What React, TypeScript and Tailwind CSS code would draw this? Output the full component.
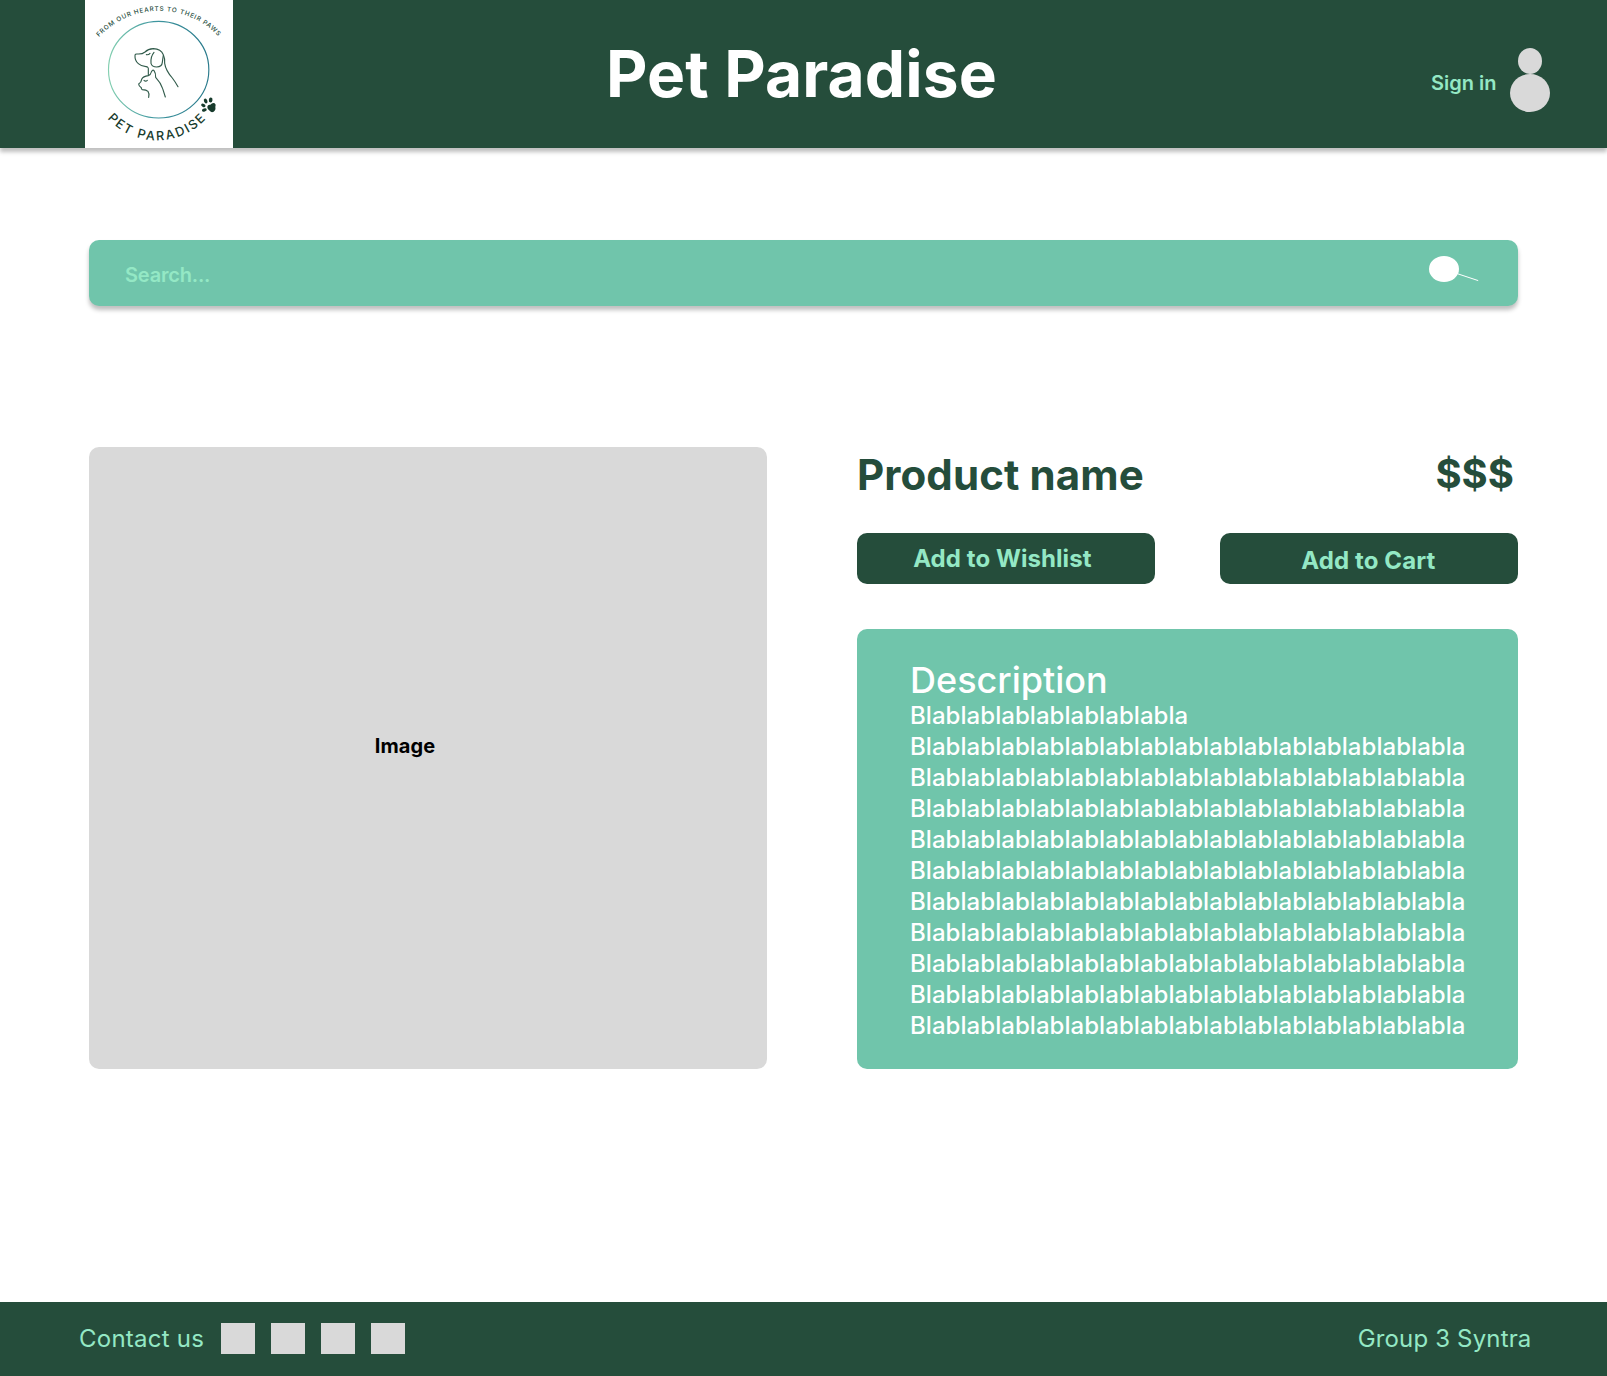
const socials = ['facebook', 'instagram', 'twitter', 'youtube'];

const description = [
  'Blablablablablablablabla',
  ...Array.from({ length: 10 }, () => 'Blablablablablablablablablablablablablablablabla'),
];

function Logo() {
  return (
    <svg className="h-[148px] w-[148px] shrink-0 bg-white" viewBox="15 0 444 444" role="img" aria-label="Pet Paradise">
      <defs>
        <linearGradient id="ring" x1="0" x2="1" y1="0" y2="0">
          <stop offset="0" stopColor="#83cfb0" />
          <stop offset="0.45" stopColor="#3f97a0" />
          <stop offset="1" stopColor="#27788a" />
        </linearGradient>
        <path id="tagline" d="M57 111A246 246 0 0 1 419 113" />
        <path id="brand" d="M82 355A200 200 0 0 0 386 347" />
      </defs>
      <ellipse cx="236" cy="209" rx="150.5" ry="145" fill="none" stroke="url(#ring)" strokeWidth="3.4" />
      <g className="font-['Inter',sans-serif]" fill="#234a3a">
        <text fontSize="19" fontWeight="500">
          <textPath href="#tagline" textLength="400">FROM OUR HEARTS TO THEIR PAWS</textPath>
        </text>
        <text fontSize="38" fontWeight="500" fill="#173b2c">
          <textPath href="#brand" textLength="332">PET PARADISE</textPath>
        </text>
      </g>
      <g fill="none" stroke="#315b4b" strokeWidth="3.4" strokeLinecap="round" strokeLinejoin="round">
        <path d="M205 226V208Q206 201 198 200Q185 200 175 191Q164 181 165 167Q165 161 172 162Q187 163 195 156Q204 147 220 146Q243 147 250 164Q255 175 254 190Q257 211 277 234Q286 246 294 260" />
        <path d="M222 157Q211 170 213 190Q216 201 230 201Q246 200 247 187Q248 178 250 166" />
        <path d="M199 164Q206 165 210 160" />
        <path d="M206 292Q209 281 204 274Q199 269 187 269Q183 267 184 263Q176 258 176 252Q184 247 185 238Q189 229 205 227Q212 225 214 216Q218 207 222 212Q227 218 227 232Q243 249 248 266L256 291" />
        <path d="M192 241Q197 246 202 241" />
      </g>
      <g fill="#173b2c">
        <path d="M382 322Q382 313 391 314Q398 306 404 310Q409 314 406 321Q408 331 401 335Q394 339 389 332Q382 330 382 322Z" />
        <ellipse cx="377" cy="303" rx="5" ry="7.5" transform="rotate(-25 377 303)" />
        <ellipse cx="392" cy="300" rx="5.5" ry="7.5" transform="rotate(8 392 300)" />
        <ellipse cx="370" cy="316" rx="4.8" ry="7" transform="rotate(-60 370 316)" />
        <ellipse cx="373" cy="330" rx="4.8" ry="7.5" transform="rotate(70 373 330)" />
      </g>
    </svg>
  );
}

export default function App() {
  return (
    <div className="flex h-[1376px] w-[1607px] flex-col bg-white font-['Inter',sans-serif]">
      <header className="flex h-[148px] shrink-0 items-start bg-[#254d3b] pl-[85px] pr-[57px] shadow-[0_4px_4px_rgba(0,0,0,0.25)]">
        <Logo />
        <h1 className="ml-[373px] pt-[38px] text-[64px] leading-[72px] font-bold tracking-[0.12px] text-white">
          Pet Paradise
        </h1>
        <a className="mt-[71px] mr-[13.5px] ml-auto text-[20px] leading-6 font-semibold text-[#94e8c5]">Sign in</a>
        <div className="mt-12 flex w-10 flex-col items-center">
          <span className="h-[26px] w-6 rounded-[50%] bg-[#d9d9d9]" />
          <span className="h-[38px] w-10 rounded-[50%] bg-[#d9d9d9]" />
        </div>
      </header>

      <main className="flex flex-1 flex-col px-[89px] pt-[92px]">
        <div className="flex h-[66px] items-start justify-between rounded-[10px] bg-[#70c5ab] pl-[36px] shadow-[0_4px_4px_rgba(0,0,0,0.25)]">
          <span className="mt-[23px] text-[20px] leading-6 font-semibold tracking-[-0.2px] text-[#94e8c5]">Search...</span>
          <svg className="mt-4 mr-[39px] h-[26px] w-[50px]" viewBox="0 0 50 26" fill="none">
            <ellipse cx="15" cy="13" rx="15" ry="13" fill="#fff" />
            <path d="M29 17.9L49.2 24.6" stroke="#fff" />
          </svg>
        </div>

        <div className="mt-[141.4px] flex items-start justify-between">
          <div className="flex h-[621.2px] w-[678px] items-start rounded-[10px] bg-[#d9d9d9] pt-[286.6px] pl-[285.8px]">
            <span className="text-[20px] leading-6 font-bold tracking-[0.1px] text-black">Image</span>
          </div>

          <section className="flex w-[661px] flex-col">
            <div className="flex h-[85.6px] items-start justify-between pr-1">
              <h2 className="mt-[2.6px] text-[42px] leading-[50px] font-bold tracking-[0.1px] text-[#254d3b]">Product name</h2>
              <span className="mt-[2.6px] text-[40px] leading-12 font-bold text-[#254d3b]">$$$</span>
            </div>
            <div className="flex justify-between">
              <button className="flex h-[51px] w-[298px] items-start rounded-[10px] bg-[#254d3b] pt-[11px] pl-[56.2px] text-2xl leading-[29px] font-bold tracking-[0.07px] text-[#94e8c5]">
                Add to Wishlist
              </button>
              <button className="flex h-[51px] w-[298px] items-start rounded-[10px] bg-[#254d3b] pt-[13px] pl-[81.2px] text-2xl leading-[29px] font-bold tracking-[0.12px] text-[#94e8c5]">
                Add to Cart
              </button>
            </div>
            <article className="mt-[45px] h-[440px] rounded-[10px] bg-[#70c5ab] pt-[29px] pl-[53px] font-medium text-white">
              <h3 className="text-[36px] leading-11">Description</h3>
              <div className="-mt-[2px] text-2xl leading-[31px] tracking-[0.05px]">
                {description.map((line, i) => (
                  <p key={i}>{line}</p>
                ))}
              </div>
            </article>
          </section>
        </div>
      </main>

      <footer className="flex h-[74px] shrink-0 items-start justify-between bg-[#254d3b] pr-[75.5px] pl-[79px] text-2xl leading-[30px] tracking-[0.16px] text-[#94e8c5]">
        <div className="flex">
          <span className="mt-[22px] w-[142px] tracking-[0.24px]">Contact us</span>
          <div className="mt-[21px] flex gap-4">
            {socials.map((name) => (
              <span key={name} aria-label={name} className="h-[31px] w-[34px] bg-[#d9d9d9]" />
            ))}
          </div>
        </div>
        <span className="mt-[22px]">Group 3 Syntra</span>
      </footer>
    </div>
  );
}
